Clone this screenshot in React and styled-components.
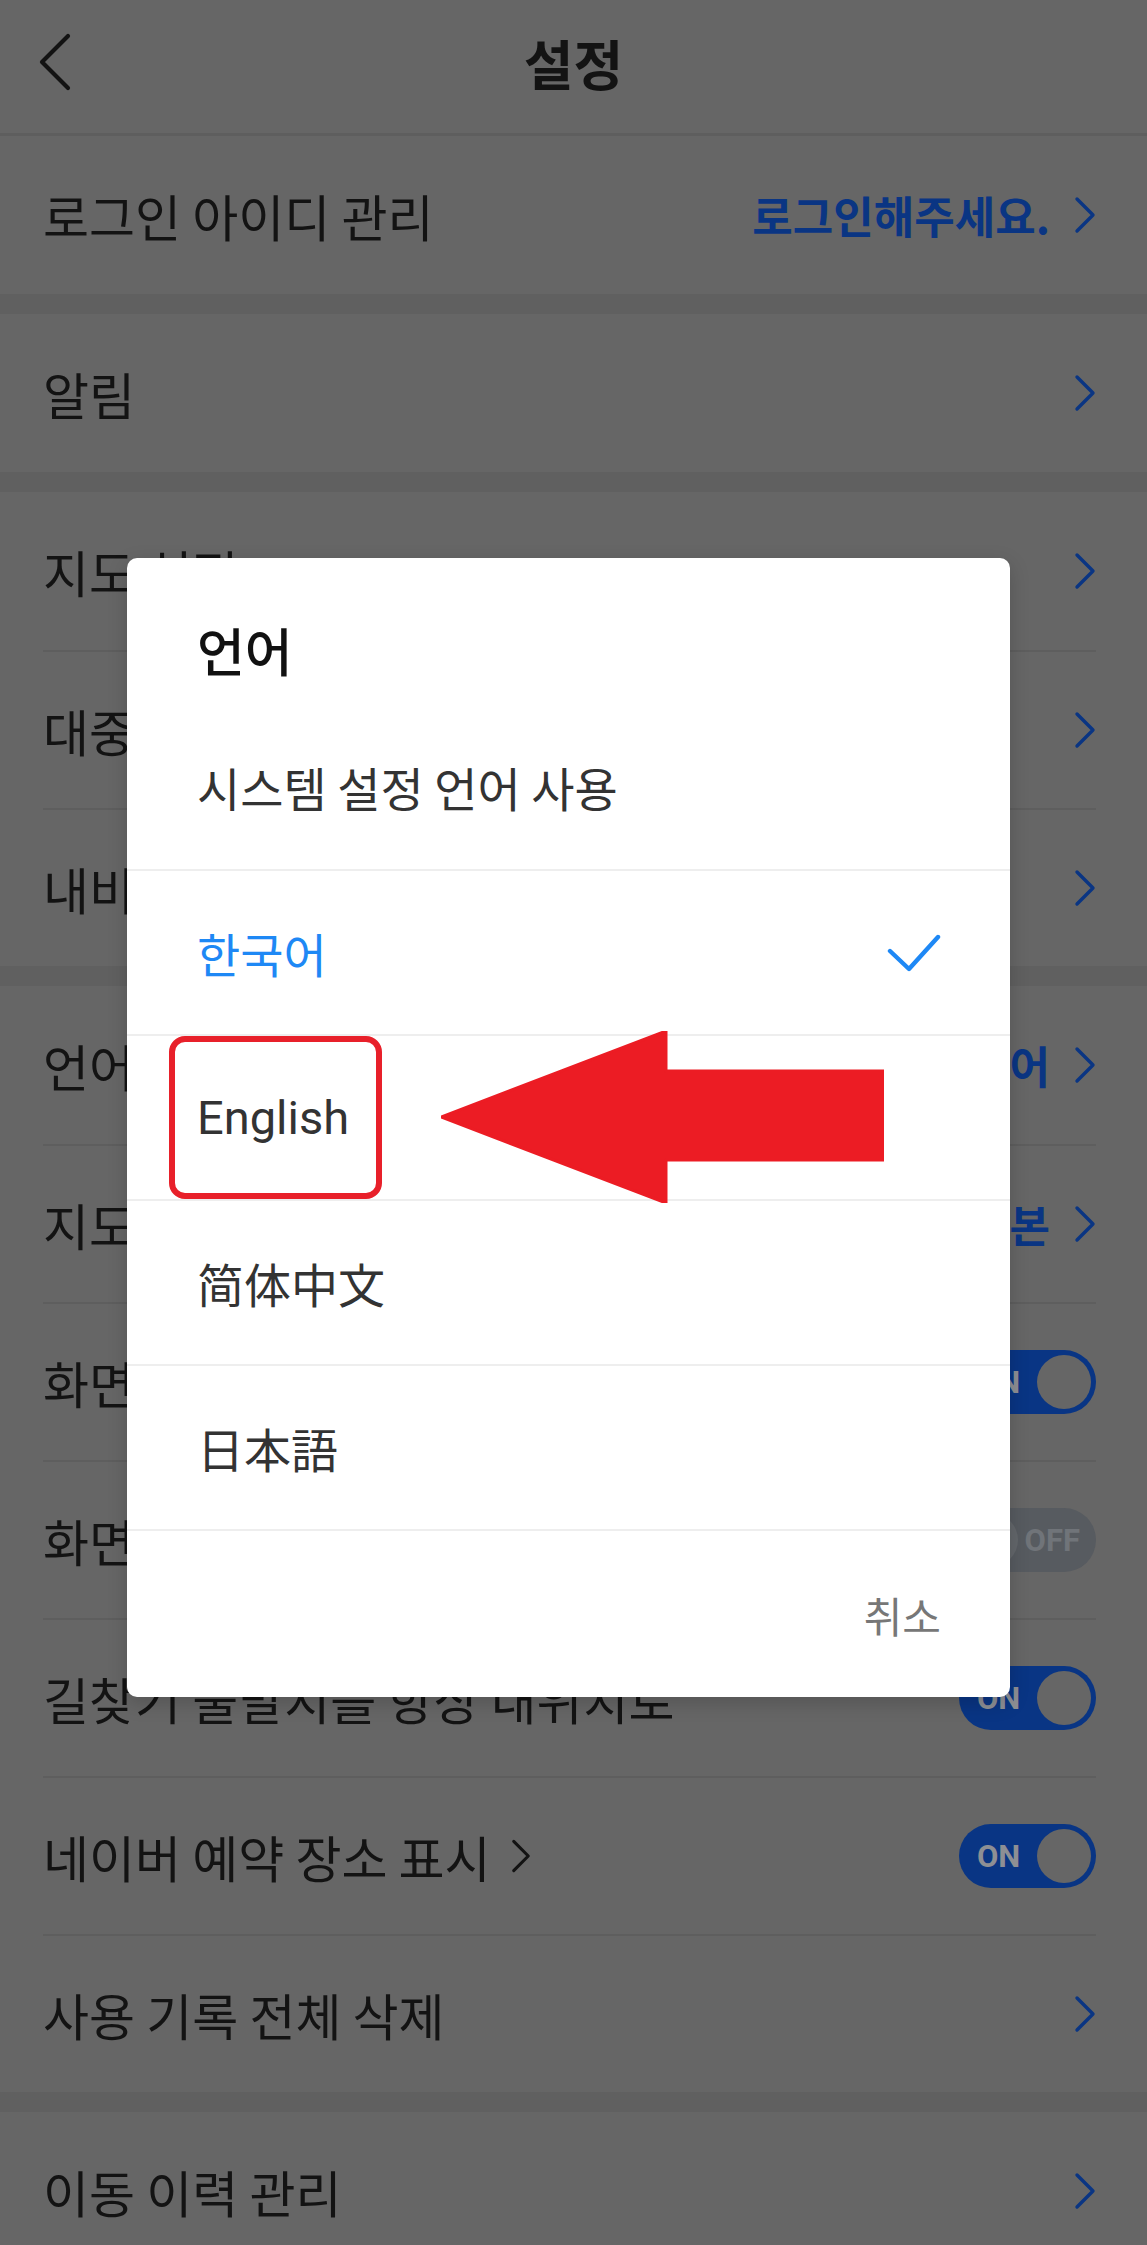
import React from 'react';
import styled, { createGlobalStyle } from 'styled-components';

/* the settings page sits under a modal, so its palette is the dimmed one */
const dim = {
  bg: '#666666',
  band: '#606060',
  line: '#5e5e5e',
  text: '#131313',
  blue: '#0a3583',
  toggleOn: '#093584',
  toggleOff: '#575b60',
};

const GlobalStyle = createGlobalStyle`
  html, body {
    margin: 0;
    padding: 0;
    background: ${dim.bg};
  }
  body {
    font-family: "Noto Sans CJK KR", "Noto Sans", sans-serif;
  }
`;

const Screen = styled.div`
  position: relative;
  width: 1147px;
  height: 2245px;
  overflow: hidden;
  background: ${dim.bg};
`;

const Header = styled.header`
  display: grid;
  grid-template-columns: 1fr auto 1fr;
  align-items: center;
  height: 136px;
  box-sizing: border-box;
  padding-bottom: 8px;
  border-bottom: 3px solid ${dim.line};
`;

const BackButton = styled.button`
  justify-self: start;
  margin-left: 36px;
  padding: 0;
  border: none;
  background: none;
  display: flex;
`;

const Title = styled.h1`
  margin: 0;
  font-size: 54px;
  font-weight: 700;
  color: ${dim.text};
`;

const Section = styled.section`
  & + & {
    border-top: 20px solid ${dim.band};
  }
`;

const Row = styled.div`
  display: flex;
  align-items: center;
  height: 158px;
  box-sizing: border-box;
  margin: 0 51px 0 43px;
  & + & {
    border-top: 2px solid ${dim.line};
  }
`;

const Label = styled.span`
  flex: 1;
  display: flex;
  align-items: center;
  font-size: 50px;
  color: ${dim.text};
  white-space: nowrap;
  svg {
    margin-left: 20px;
  }
`;

const Value = styled.span`
  font-size: 44px;
  font-weight: 600;
  color: ${dim.blue};
  margin-right: 24px;
  white-space: nowrap;
`;

const Toggle = styled.div`
  display: flex;
  align-items: center;
  justify-content: space-between;
  flex-direction: ${(p) => (p.on ? 'row' : 'row-reverse')};
  width: 137px;
  height: 64px;
  box-sizing: border-box;
  padding: ${(p) => (p.on ? '0 5px 0 18px' : '0 16px 0 5px')};
  border-radius: 32px;
  background: ${(p) => (p.on ? dim.toggleOn : dim.toggleOff)};
  span {
    font-family: Roboto, sans-serif;
    font-size: 31px;
    font-weight: 700;
    color: ${(p) => (p.on ? '#8d8f94' : '#707479')};
  }
`;

const Knob = styled.i`
  width: 54px;
  height: 54px;
  border-radius: 50%;
  background: ${(p) => (p.on ? dim.bg : '#63676b')};
`;

/* modal */
const ModalLayer = styled.div`
  position: absolute;
  inset: 0;
  display: flex;
  align-items: center;
  padding: 10px 0 0 127px;
`;

const Dialog = styled.div`
  position: relative;
  width: 883px;
  background: #fff;
  border-radius: 10px;
  box-shadow: 0 6px 20px rgba(0, 0, 0, 0.18);
`;

const DialogTitle = styled.h2`
  margin: 0;
  height: 146px;
  box-sizing: border-box;
  padding: 62px 70px 0;
  font-size: 52px;
  line-height: 60px;
  font-weight: 500;
  color: #111;
`;

const Option = styled.div`
  display: flex;
  align-items: center;
  justify-content: space-between;
  height: 165px;
  box-sizing: border-box;
  padding: 0 69px 0 70px;
  font-family: ${(p) => (p.latin ? 'Roboto, ' : '')}"Noto Sans CJK KR", sans-serif;
  font-size: ${(p) => (p.latin ? '47px' : '47px')};
  color: ${(p) => (p.selected ? '#1e88f5' : '#333')};
  & + & {
    border-top: 2px solid #eeeeee;
  }
`;

const Marked = styled.span`
  display: flex;
  align-items: center;
  align-self: stretch;
  margin-left: -28px;
  padding: 0 27px 0 22px;
  border: 6px solid #e8202a;
  border-radius: 16px;
`;

const Footer = styled.div`
  display: flex;
  justify-content: flex-end;
  align-items: center;
  height: 168px;
  box-sizing: border-box;
  padding: 0 69px;
  border-top: 2px solid #eeeeee;
`;

const CancelButton = styled.button`
  padding: 0;
  border: none;
  background: none;
  font-family: "Noto Sans CJK KR", sans-serif;
  font-size: 42px;
  color: #777;
`;

const Arrow = styled.svg`
  position: absolute;
  left: 314px;
  top: 473px;
`;

const ChevronRight = ({ color = dim.blue, w = 22, h = 38 }) => (
  <svg width={w} height={h} viewBox="0 0 22 38" fill="none">
    <path d="M3 3 L19 19 L3 35" stroke={color} strokeWidth="3.4" strokeLinecap="round" strokeLinejoin="round" />
  </svg>
);

const sections = [
  [{ label: '로그인 아이디 관리', value: '로그인해주세요.', chevron: true }],
  [{ label: '알림', chevron: true }],
  [
    { label: '지도 설정', chevron: true },
    { label: '대중교통 설정', chevron: true },
    { label: '내비게이션 설정', chevron: true },
  ],
  [
    { label: '언어', value: '한국어', chevron: true },
    { label: '지도 글자 크기', value: '기본', chevron: true },
    { label: '화면 꺼짐 방지', toggle: true },
    { label: '화면 자동 회전', toggle: false },
    { label: '길찾기 출발지를 항상 내위치로', toggle: true },
    { label: '네이버 예약 장소 표시', inlineChevron: true, toggle: true },
    { label: '사용 기록 전체 삭제', chevron: true },
  ],
  [{ label: '이동 이력 관리', chevron: true }],
];

const languages = ['시스템 설정 언어 사용', '한국어', 'English', '简体中文', '日本語'];

const SettingRow = ({ label, value, chevron, toggle, inlineChevron }) => (
  <Row>
    <Label>
      {label}
      {inlineChevron && <ChevronRight color={dim.text} w={20} h={36} />}
    </Label>
    {value && <Value>{value}</Value>}
    {chevron && <ChevronRight />}
    {toggle !== undefined && (
      <Toggle on={toggle}>
        <span>{toggle ? 'ON' : 'OFF'}</span>
        <Knob on={toggle} />
      </Toggle>
    )}
  </Row>
);

const App = () => {
  const selected = '한국어';
  return (
    <Screen>
      <GlobalStyle />
      <Header>
        <BackButton>
          <svg width="40" height="62" viewBox="0 0 40 62" fill="none">
            <path d="M32 4 L6 30 L32 56" stroke={dim.text} strokeWidth="4.2" strokeLinecap="round" strokeLinejoin="round" />
          </svg>
        </BackButton>
        <Title>설정</Title>
      </Header>
      {sections.map((rows, i) => (
        <Section key={i}>
          {rows.map((row) => (
            <SettingRow key={row.label} {...row} />
          ))}
        </Section>
      ))}

      <ModalLayer>
        <Dialog>
          <DialogTitle>언어</DialogTitle>
          {languages.map((lang) => (
            <Option key={lang} selected={lang === selected} latin={lang === 'English'}>
              {lang === 'English' ? <Marked>{lang}</Marked> : lang}
              {lang === selected && (
                <svg width="54" height="40" viewBox="0 0 54 40" fill="none">
                  <path d="M3 18 L22 36 L51 4" stroke="#1e88f5" strokeWidth="4.4" strokeLinecap="round" strokeLinejoin="round" />
                </svg>
              )}
            </Option>
          ))}
          <Footer>
            <CancelButton>취소</CancelButton>
          </Footer>
          {/* red arrow pointing at English */}
          <Arrow width="443" height="172" viewBox="0 0 443 172">
            <polygon points="0,86 225,0 225,40 443,40 443,129 225,129 225,172" fill="#ec1c24" strokeLinejoin="round" stroke="#ec1c24" strokeWidth="3" />
          </Arrow>
        </Dialog>
      </ModalLayer>
    </Screen>
  );
};

export default App;
